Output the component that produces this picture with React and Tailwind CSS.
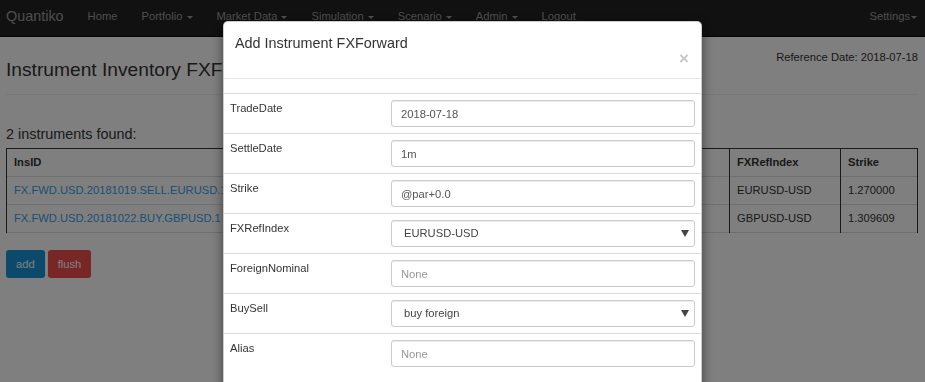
import React from 'react';

const NAV = [
  { label: 'Home', caret: false },
  { label: 'Portfolio', caret: true },
  { label: 'Market Data', caret: true },
  { label: 'Simulation', caret: true },
  { label: 'Scenario', caret: true },
  { label: 'Admin', caret: true },
  { label: 'Logout', caret: false },
];

const ROWS = [
  { insId: 'FX.FWD.USD.20181019.SELL.EURUSD.1', trade: '2018-07-18', settle: '2018-10-19', buySell: 'sell foreign', index: 'EURUSD-USD', strike: '1.270000' },
  { insId: 'FX.FWD.USD.20181022.BUY.GBPUSD.1', trade: '2018-07-18', settle: '2018-10-22', buySell: 'buy foreign', index: 'GBPUSD-USD', strike: '1.309609' },
];

const FIELDS = [
  { label: 'TradeDate', value: '2018-07-18' },
  { label: 'SettleDate', value: '1m' },
  { label: 'Strike', value: '@par+0.0' },
  { label: 'FXRefIndex', value: 'EURUSD-USD', select: ['EURUSD-USD', 'GBPUSD-USD'] },
  { label: 'ForeignNominal', value: '', placeholder: 'None' },
  { label: 'BuySell', value: 'buy foreign', select: ['buy foreign', 'sell foreign'] },
  { label: 'Alias', value: '', placeholder: 'None' },
];

function Caret() {
  return <span className="inline-block w-0 h-0 ml-[4px] align-middle border-t-[3px] border-x-[3px] border-x-transparent border-t-current" />;
}

export default function App() {
  return (
    <div className="relative min-h-screen bg-white text-[#333] text-[11.2px] font-['Liberation_Sans',Arial,sans-serif]">
      {/* Navbar */}
      <nav className="flex items-center h-[37px] bg-[#222] border-b border-[#080808] text-[#9d9d9d]">
        <span className="pl-[6px] pr-[12px] text-[14.4px] leading-[20px] pb-[4px]">Quantiko</span>
        {NAV.map((item) => (
          <span key={item.label} className="px-[12px] pb-[4px] leading-[16px] whitespace-nowrap">
            {item.label}
            {item.caret && <Caret />}
          </span>
        ))}
        <span className="ml-auto pr-[8px] pb-[4px] leading-[16px]">
          Settings
          <span className="inline-block w-0 h-0 ml-[1px] align-middle border-t-[3px] border-x-[3px] border-x-transparent border-t-current" />
        </span>
      </nav>

      {/* Page content */}
      <div className="px-[6px] pr-[7px]">
        <div className="flex justify-between items-start">
          <h3 className="mt-[22px] text-[19.2px] leading-[21px]">Instrument Inventory FXForward</h3>
          <span className="mt-[12px] leading-[16px]">Reference Date: 2018-07-18</span>
        </div>
        <hr className="mt-[14px] border-t border-[#eee]" />
        <h4 className="mt-[31px] mb-[6px] text-[14.4px] leading-[16px]">2 instruments found:</h4>

        <table className="w-full table-fixed border-collapse border border-[#333]">
          <colgroup>
            <col className="w-[300px]" />
            <col className="w-[140px]" />
            <col className="w-[140px]" />
            <col />
            <col className="w-[111px]" />
            <col className="w-[77px]" />
          </colgroup>
          <thead>
            <tr className="h-[28px] border-b border-[#ddd]">
              {['InsID', 'TradeDate', 'SettleDate', 'BuySell', 'FXRefIndex', 'Strike'].map((h) => (
                <th key={h} className="px-[7px] text-left font-bold border-x border-[#333]">{h}</th>
              ))}
            </tr>
          </thead>
          <tbody>
            {ROWS.map((r) => (
              <tr key={r.insId} className="h-[28px] border-b border-[#ddd]">
                <td className="px-[7px] border-x border-[#333] text-[#3a9ee6] whitespace-nowrap overflow-hidden">{r.insId}</td>
                <td className="px-[7px] border-x border-[#333]">{r.trade}</td>
                <td className="px-[7px] border-x border-[#333]">{r.settle}</td>
                <td className="px-[7px] border-x border-[#333]">{r.buySell}</td>
                <td className="px-[7px] border-x border-[#333]">{r.index}</td>
                <td className="px-[7px] border-x border-[#333]">{r.strike}</td>
              </tr>
            ))}
          </tbody>
        </table>

        <div className="flex gap-[3px] mt-[17px]">
          <button className="h-[28px] px-[10px] rounded-[3px] bg-[#1894d8] text-white">add</button>
          <button className="h-[28px] px-[10px] rounded-[3px] bg-[#f24c4c] text-white">flush</button>
        </div>
      </div>

      {/* Modal overlay */}
      <div className="fixed inset-0 bg-black/50 overflow-hidden">
        <div className="mx-auto mt-[21px] w-[479px] bg-white rounded-[5px] border border-black/20 shadow-[0_4px_12px_rgba(0,0,0,0.5)]">
          <div className="flex justify-between items-start h-[57px] pl-[11px] pr-[12px] pt-[13px] border-b border-[#e5e5e5]">
            <h4 className="text-[14.4px] leading-[16px] text-[#333]">Add Instrument FXForward</h4>
            <span className="mt-[15px] text-[17px] leading-[17px] font-bold text-[#c8c8c8]">×</span>
          </div>
          <div className="pt-[14px] pb-[20px]">
            {FIELDS.map((f) => (
              <div key={f.label} className="flex h-[40px] px-[6px] border-t border-[#ddd]">
                <label className="w-[161px] pt-[6px] leading-[16px]">{f.label}</label>
                <div className="flex-1 pt-[6px]">
                  {f.select ? (
                    <div className="relative">
                      <select
                        defaultValue={f.value}
                        className="w-full h-[27px] pl-[12px] pr-[24px] appearance-none bg-white border border-[#ccc] rounded-[3px] text-[11.2px] text-[#444] shadow-[inset_0_1px_1px_rgba(0,0,0,0.075)] outline-none"
                      >
                        {f.select.map((o) => (
                          <option key={o} value={o}>{o}</option>
                        ))}
                      </select>
                      <svg className="absolute right-[6px] top-[10px] pointer-events-none" width="8" height="7" viewBox="0 0 8 7">
                        <path d="M0 0 H8 L4 7 Z" fill="#444" />
                      </svg>
                    </div>
                  ) : (
                    <input
                      type="text"
                      defaultValue={f.value}
                      placeholder={f.placeholder}
                      className="w-full h-[27px] px-[9px] bg-white border border-[#ccc] rounded-[3px] text-[11.2px] text-[#555] placeholder:text-[#999] shadow-[inset_0_1px_1px_rgba(0,0,0,0.075)] outline-none"
                    />
                  )}
                </div>
              </div>
            ))}
          </div>
        </div>
      </div>
    </div>
  );
}
